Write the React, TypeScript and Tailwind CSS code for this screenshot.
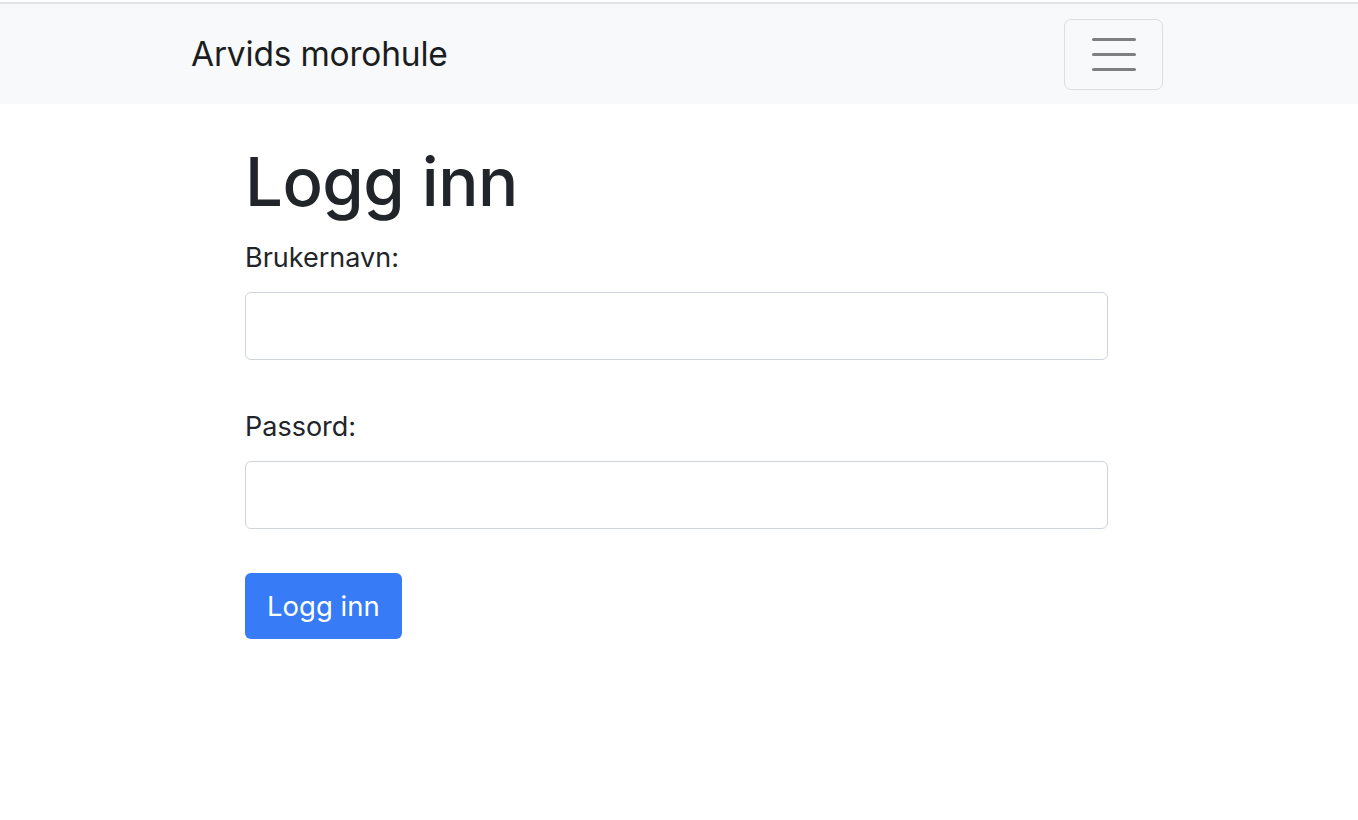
export default function App() {
    return (
        <div className="min-h-screen bg-white text-[#212529]" style={{ fontFamily: 'Inter, "Noto Sans", sans-serif' }}>
            <div className="h-[2px] bg-white"></div>
            <div className="h-[2px] bg-[#e1e3e5]"></div>
            <nav className="bg-[#f8f9fa] h-[100px]">
                <div className="w-[976px] mx-auto pr-1 h-full flex items-center justify-between">
                    <span className="text-[33.5px] text-[#1b1e21] tracking-[-0.2px]">Arvids morohule</span>
                    <button className="w-[99px] h-[71px] rounded-[7px] border border-[#dcdee0] flex flex-col items-center justify-center gap-[12px]">
                        <span className="block w-[44px] h-[3px] rounded-full bg-[#7d7f81]"></span>
                        <span className="block w-[44px] h-[3px] rounded-full bg-[#7d7f81]"></span>
                        <span className="block w-[44px] h-[3px] rounded-full bg-[#7d7f81]"></span>
                    </button>
                </div>
            </nav>
            <main className="w-[868px] mx-auto pr-[5px] pt-[38px]">
                <h1 className="text-[67px] font-medium leading-[1.2] tracking-[-0.5px]">Logg inn</h1>
                <form className="flex flex-col">
                    <label className="text-[27px] leading-[1.5] mt-[16px] mb-[13px]">Brukernavn:</label>
                    <input className="h-[68px] rounded-[6px] border border-[#ced4da] outline-none px-4 text-[27px]" />
                    <label className="text-[27px] leading-[1.5] mt-[47px] mb-[14px]">Passord:</label>
                    <input type="password" className="h-[68px] rounded-[6px] border border-[#ced4da] outline-none px-4 text-[27px]" />
                    <div className="mt-[44px]">
                        <button type="button" className="h-[66px] px-[22px] rounded-[6px] bg-[#377bf6] text-white text-[27.5px]">Logg inn</button>
                    </div>
                </form>
            </main>
        </div>
    );
}
